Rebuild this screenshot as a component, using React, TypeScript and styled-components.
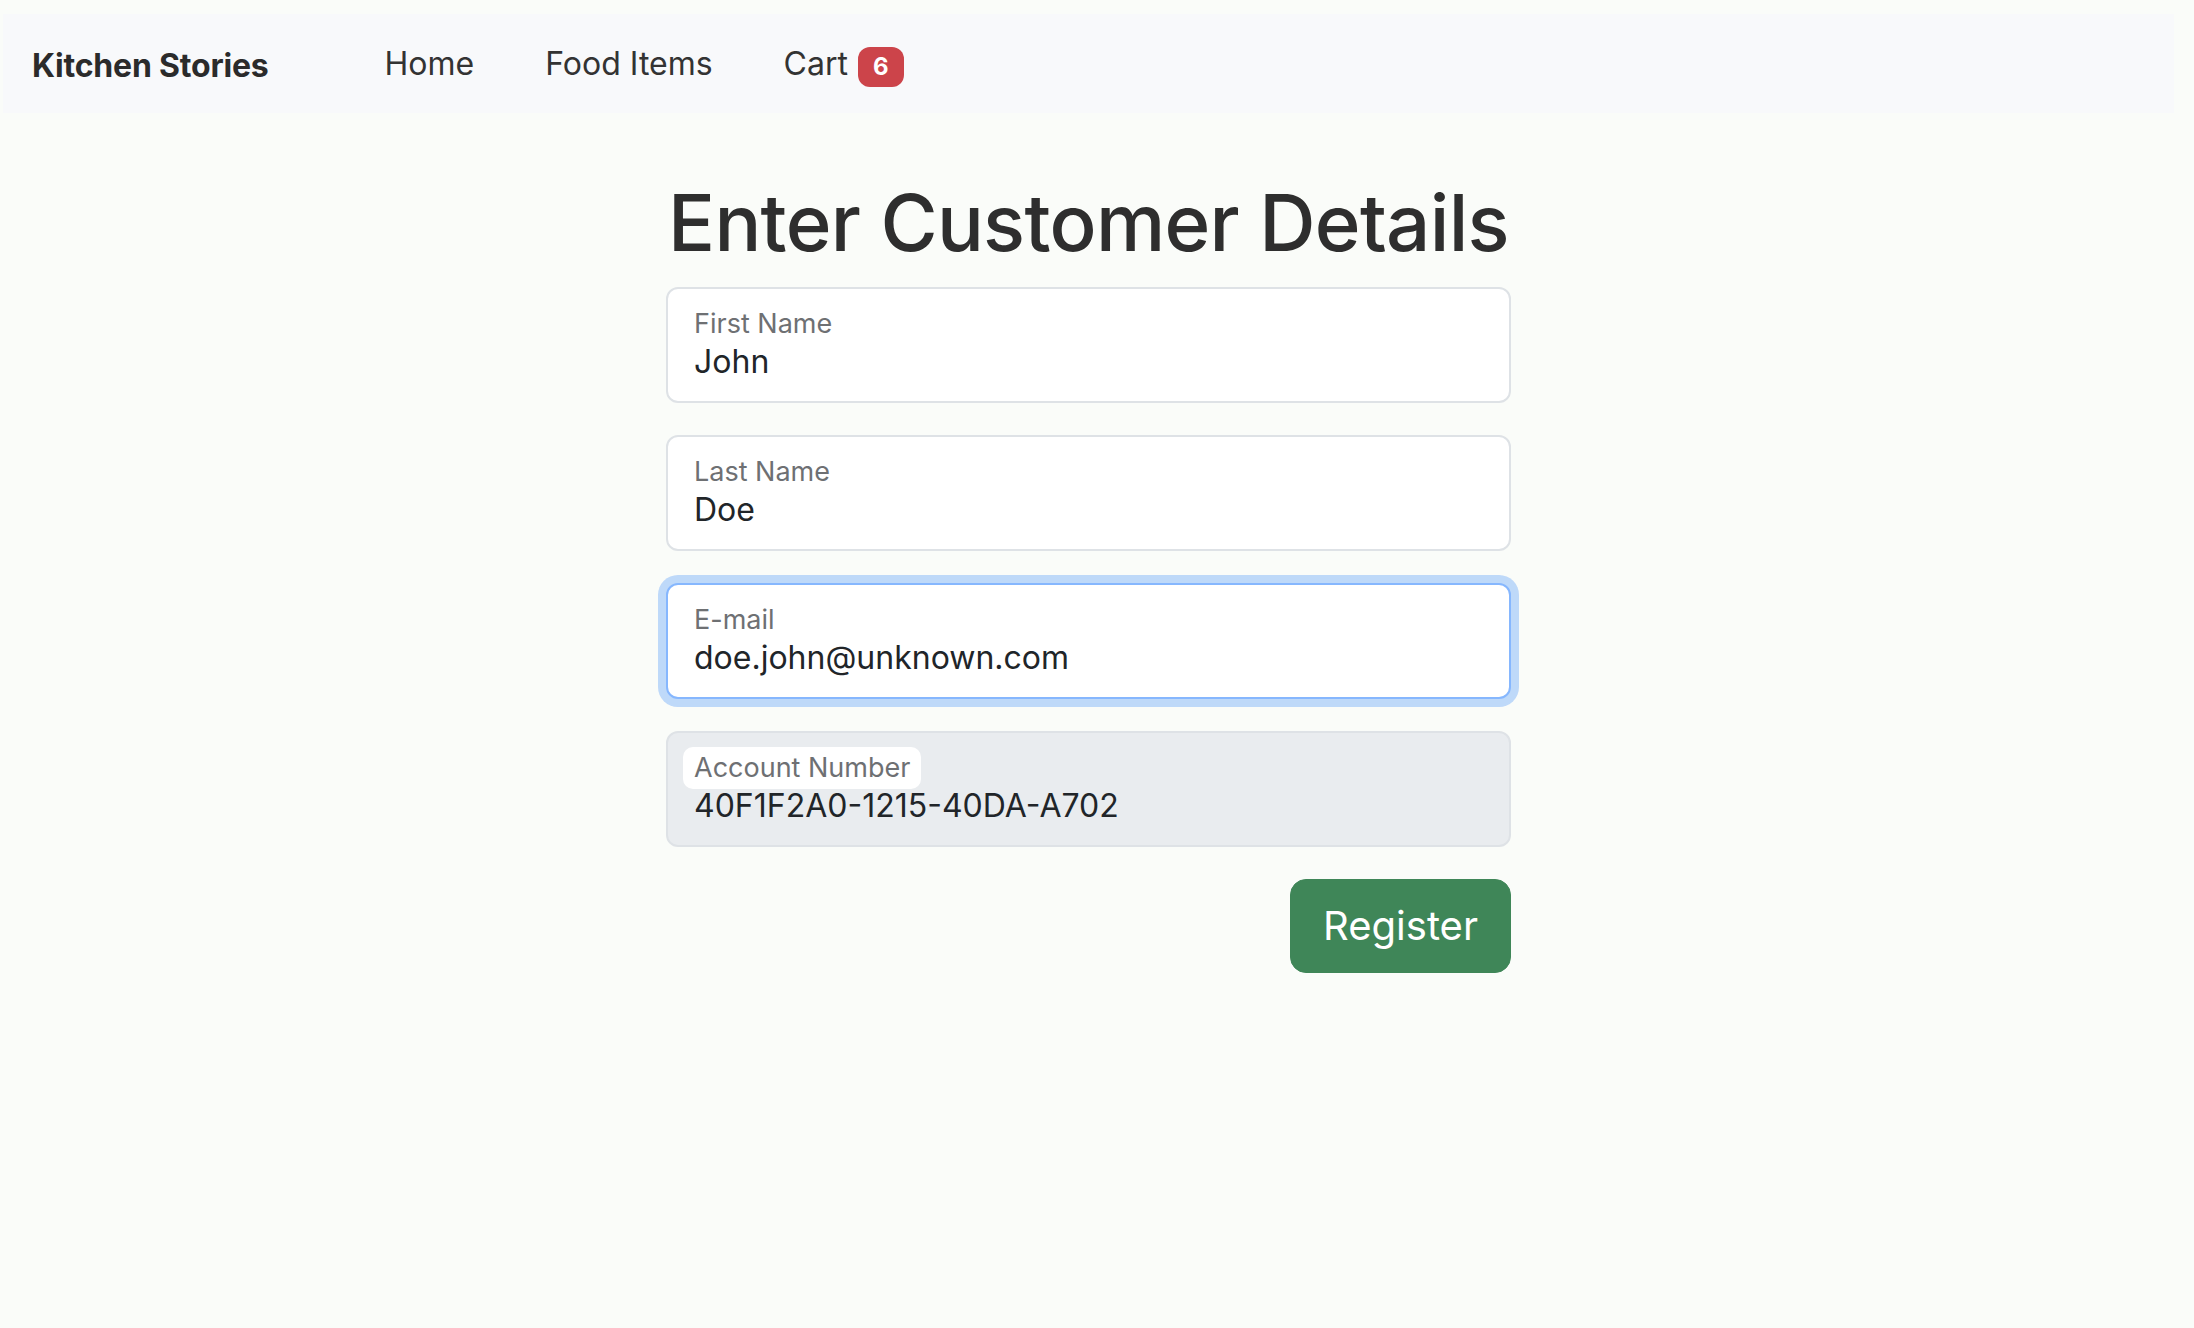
import styled, { createGlobalStyle } from "styled-components";

const GlobalStyle = createGlobalStyle`
	html, body {
		margin: 0;
		padding: 0;
		background: #fafcf9;
	}
	body {
		font-family: Inter, "Noto Sans", "Liberation Sans", sans-serif;
		color: #212529;
	}
`;

const Page = styled.div`
	min-height: 1328px;
	box-sizing: border-box;
	padding: 14px 20px 0 3px;
`;

const NavBar = styled.nav`
	height: 99px;
	box-sizing: border-box;
	display: flex;
	align-items: center;
	padding: 3px 0 0 29px;
	background: #f8f9fb;
`;

const Brand = styled.a`
	font-size: 32px;
	font-weight: 700;
	color: #2b2b2b;
	text-decoration: none;
	margin-right: 116px;
	letter-spacing: -0.2px;
`;

const NavLinks = styled.div`
	display: flex;
	align-items: baseline;
	gap: 71px;
`;

const NavLink = styled.a`
	font-size: 32px;
	color: #333;
	text-decoration: none;
	display: inline-flex;
	align-items: baseline;
`;

const Badge = styled.span`
	margin-left: 10px;
	display: inline-block;
	background: #cc444a;
	color: #fff;
	font-size: 24px;
	font-weight: 700;
	line-height: 1;
	padding: 8px 15px;
	border-radius: 12px;
`;

const Main = styled.main`
	width: 845px;
	margin: 0 auto;
	padding-top: 62px;
	display: flex;
	flex-direction: column;
`;

const Title = styled.h1`
	margin: 0 0 16px;
	font-size: 78px;
	font-weight: 500;
	line-height: 96px;
	color: #2e2e2e;
	text-align: center;
	white-space: nowrap;
	letter-spacing: -0.7px;
`;

const Field = styled.div<{ $focused?: boolean; $disabled?: boolean }>`
	height: 116px;
	box-sizing: border-box;
	margin-bottom: 32px;
	padding: 17px 26px 0 26px;
	border: 2px solid ${(p) => (p.$focused ? "#86b7fe" : "#dee2e6")};
	border-radius: 12px;
	background: ${(p) => (p.$disabled ? "#e9ecef" : "#fff")};
	box-shadow: ${(p) => (p.$focused ? "0 0 0 8px rgba(13, 110, 253, 0.25)" : "none")};
	display: flex;
	flex-direction: column;
	align-items: flex-start;
`;

const Label = styled.span<{ $chip?: boolean }>`
	font-size: 27px;
	line-height: 36px;
	color: #6e7073;
	${(p) =>
		p.$chip &&
		`
		background: #fff;
		border-radius: 10px;
		padding: 3px 11px 3px;
		margin: -3px 0 -3px -11px;
	`}
`;

const Value = styled.span`
	font-size: 32px;
	line-height: 40px;
	color: #212529;
`;

const Actions = styled.div`
	display: flex;
	justify-content: flex-end;
`;

const RegisterButton = styled.button`
	font-family: inherit;
	font-size: 40px;
	line-height: 60px;
	color: #fff;
	background: #3f8658;
	border: 1px solid #3f8658;
	border-radius: 16px;
	padding: 16px 32px;
	cursor: pointer;
`;

const fields = [
	{ label: "First Name", value: "John" },
	{ label: "Last Name", value: "Doe" },
	{ label: "E-mail", value: "doe.john@unknown.com", focused: true },
	{ label: "Account Number", value: "40F1F2A0-1215-40DA-A702", disabled: true },
];

export default function App() {
	return (
		<>
			<GlobalStyle />
			<Page>
				<NavBar>
					<Brand href="#">Kitchen Stories</Brand>
					<NavLinks>
						<NavLink href="#">Home</NavLink>
						<NavLink href="#">Food Items</NavLink>
						<NavLink href="#">
							Cart<Badge>6</Badge>
						</NavLink>
					</NavLinks>
				</NavBar>
				<Main>
					<Title>Enter Customer Details</Title>
					{fields.map((f) => (
						<Field key={f.label} $focused={f.focused} $disabled={f.disabled}>
							<Label $chip={f.disabled}>{f.label}</Label>
							<Value>{f.value}</Value>
						</Field>
					))}
					<Actions>
						<RegisterButton>Register</RegisterButton>
					</Actions>
				</Main>
			</Page>
		</>
	);
}
